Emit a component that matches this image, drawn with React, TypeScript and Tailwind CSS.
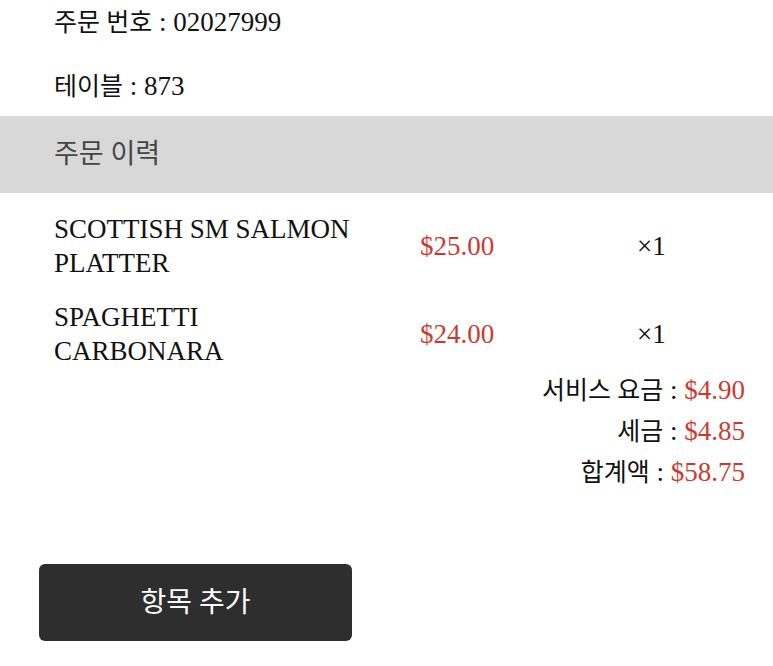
function K({ children }: { children: React.ReactNode }) {
  return <span className="text-[25px]">{children}</span>;
}

export default function App() {
  const items = [
    { name: "SCOTTISH SM SALMON PLATTER", price: "$25.00", qty: 1 },
    { name: "SPAGHETTI CARBONARA", price: "$24.00", qty: 1 },
  ];

  return (
    <div
      className="w-[773px] h-[666px] bg-white text-[#111] text-[27px]"
      style={{ fontFamily: '"Liberation Serif", "Noto Sans CJK KR", serif' }}
    >
      <div className="px-[54px]">
        <p className="leading-[44px]">
          <K>주문 번호</K> : 02027999
        </p>
        <p className="mt-[19px] leading-[44px]">
          <K>테이블</K> : 873
        </p>
      </div>

      <div className="mt-[7px] h-[77px] bg-[#d8d8d8] flex items-center px-[54px]">
        <p className="text-[27px] text-[#454545]">주문 이력</p>
      </div>

      <div className="mt-[19px] pl-[54px] flex flex-col gap-[20px]">
        {items.map((item) => (
          <div
            key={item.name}
            className="grid grid-cols-[366px_217px_auto] items-center leading-[34px]"
          >
            <p className="w-[305px]">{item.name}</p>
            <p className="text-[#cc3a2f]">{item.price}</p>
            <p>×{item.qty}</p>
          </div>
        ))}
      </div>

      <div className="mt-[2px] pr-[28px] flex flex-col items-end leading-[41px]">
        <p>
          <K>서비스 요금</K> : <span className="text-[#cc3a2f]">$4.90</span>
        </p>
        <p>
          <K>세금</K> : <span className="text-[#cc3a2f]">$4.85</span>
        </p>
        <p>
          <K>합계액</K> : <span className="text-[#cc3a2f]">$58.75</span>
        </p>
      </div>

      <div className="mt-[71px] pl-[39px]">
        <button className="w-[313px] h-[77px] rounded-[6px] bg-[#2e2e2e] text-white text-[28px]">
          항목 추가
        </button>
      </div>
    </div>
  );
}
